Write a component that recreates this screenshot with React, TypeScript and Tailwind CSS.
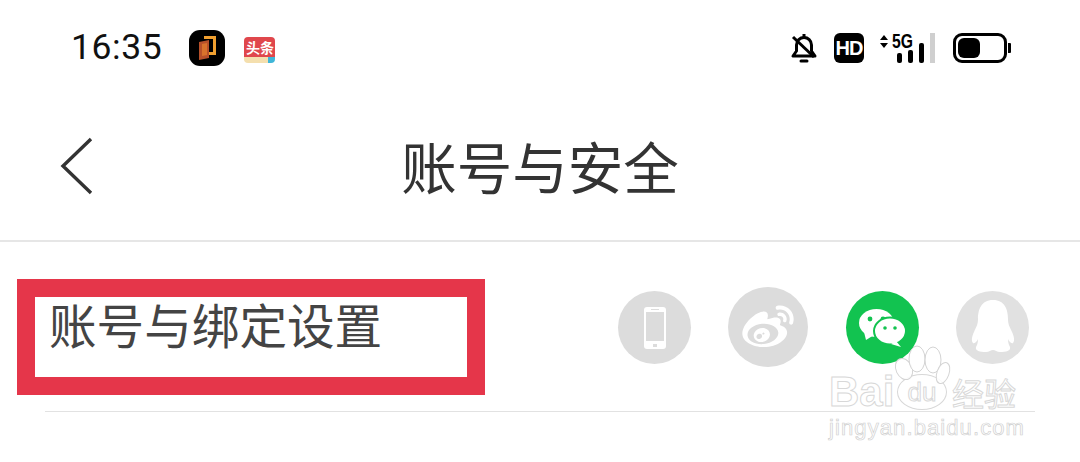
import React from "react";
import { RiWeiboFill } from "react-icons/ri";

const cjk = "font-['Noto_Sans_CJK_SC','Noto_Sans',sans-serif]";

function AppIcon() {
  return (
    <div className="w-9 h-9 rounded-[11px] bg-black flex items-center justify-center">
      <svg width="22" height="26" viewBox="0 0 22 26">
        <path d="M3 7 L13 5 V23 L3 25 Z" fill="#b8502a" />
        <path d="M6 9 L11 8 V20 L6 21 Z" fill="#d9722c" />
        <path d="M8 1 H20 V20 H13 V17 H17 V4 H8 Z" fill="#f0a030" />
      </svg>
    </div>
  );
}

function Toutiao() {
  return (
    <div className="w-[31px] h-[26px] flex flex-col">
      <div className="h-[20px] rounded-t-[4px] bg-[#e0474c] flex items-center justify-center">
        <span className={`text-white text-[14px] leading-[20px] font-bold ${cjk}`}>头条</span>
      </div>
      <div className="flex h-[6px]">
        <div className="flex-1 rounded-bl-[4px] bg-[#f4dfae]" />
        <div className="w-[7px] rounded-br-[4px] bg-[#3fb6d8]" />
      </div>
    </div>
  );
}

function StatusRight() {
  return (
    <div className="flex items-center">
      <svg width="28" height="32" viewBox="0 0 28 32" fill="none" stroke="#000" strokeWidth="3">
        <path d="M3 24 H25 L21.5 19 V13 C21.5 8.5 18 5.5 14 5.5 C10 5.5 6.5 8.5 6.5 13 V19 Z" strokeLinejoin="round" />
        <path d="M14 2 V5" />
        <path d="M3 5 L24 25" />
        <path d="M11 29 H17" strokeLinecap="round" strokeWidth="3" />
      </svg>
      <div className="ml-[16px] w-[30px] h-[30px] rounded-[6px] bg-black text-white flex items-center justify-center text-[20px] font-bold tracking-[-1px] font-['Liberation_Sans',sans-serif]">
        <span>HD</span>
      </div>
      <svg width="56" height="40" viewBox="0 -4 56 40" className="ml-[15px]">
        <path d="M1 8 L5 3 L9 8 Z M1 11 L9 11 L5 16 Z" fill="#000" />
        <rect x="18" y="21" width="5" height="10" rx="2" fill="#000" />
        <rect x="29" y="18" width="5" height="13" rx="2" fill="#000" />
        <rect x="40" y="11" width="5" height="20" rx="2" fill="#000" />
        <rect x="51" y="1" width="5" height="30" fill="#cfcfcf" />
        <text x="13" y="16" fontSize="20" fontWeight="700" fontFamily="Liberation Sans" fill="#000" textLength="21" lengthAdjust="spacingAndGlyphs">5G</text>
      </svg>
      <div className="ml-[18px] w-[54px] h-[30px] rounded-[9px] border-[3px] border-black p-[2px] bg-white">
        <div className="w-[22px] h-full rounded-[6px] bg-black" />
      </div>
      <div className="ml-[1px] w-[3px] h-[10px] bg-black rounded-r-[1px]" />
    </div>
  );
}

function Circle({ children, className }: { children: React.ReactNode; className: string }) {
  return <div className={`rounded-full flex items-center justify-center shrink-0 ${className}`}>{children}</div>;
}

function Watermark() {
  return (
    <div className="absolute left-[829px] top-[372px] w-[200px] h-[70px] pointer-events-none">
      <svg className="absolute left-[64px] top-[-27px]" width="60" height="42" viewBox="0 0 60 42" fill="#fff" fillOpacity="0.85" stroke="#d4d4d4" strokeWidth="1">
        <ellipse cx="11" cy="24" rx="8" ry="11" transform="rotate(-25 11 24)" />
        <ellipse cx="24" cy="14" rx="8" ry="13" />
        <ellipse cx="40" cy="15" rx="8" ry="13" />
        <ellipse cx="50" cy="28" rx="6" ry="11" transform="rotate(20 50 28)" />
      </svg>
      <div className="flex items-center h-[40px] text-transparent [-webkit-text-stroke:1px_#d8d8d8] font-['Liberation_Sans',sans-serif]">
        <span className="text-[42px] leading-[40px] font-bold w-[68px]">Bai</span>
        <div className="w-[50px] h-[36px] rounded-[50%] border border-[#d8d8d8] bg-white flex items-center justify-center">
          <span className="text-[26px] leading-none">du</span>
        </div>
        <span className={`text-[32px] leading-[40px] ml-[5px] ${cjk}`}>经验</span>
      </div>
      <div className="mt-[3px] text-[22px] leading-[26px] tracking-[1.1px] text-transparent [-webkit-text-stroke:0.7px_#d0d0d0] font-['Liberation_Sans',sans-serif]">
        jingyan.baidu.com
      </div>
    </div>
  );
}

export default function App() {
  return (
    <div className="relative w-[1080px] h-[462px] bg-white overflow-hidden">
      {/* status bar */}
      <div className="h-[96px] flex items-center pl-[71px] pr-[69px]">
        <span className="text-[35.5px] leading-[40px] -mt-[2px] tracking-[0.6px] text-[#111] font-['Roboto',sans-serif]">16:35</span>
        <div className="ml-[27px]"><AppIcon /></div>
        <div className="ml-[19px] mt-[3px]"><Toutiao /></div>
        <div className="ml-auto"><StatusRight /></div>
      </div>

      {/* header */}
      <div className="relative h-[146px] flex items-center justify-center border-b-2 border-[#e6e6e6]">
        <svg className="absolute left-[59px] top-[41px]" width="34" height="58" viewBox="0 0 34 58" fill="none" stroke="#333" strokeWidth="3.4">
          <path d="M32 2 L4 29 L32 56" />
        </svg>
        <h1 className={`text-[55.5px] leading-[60px] text-[#333] font-normal -mt-[6px] ${cjk}`}>账号与安全</h1>
      </div>

      {/* row */}
      <div className="relative h-[169px] flex items-start">
        <div className="mt-[37px] ml-[17px] w-[468px] h-[116px] border-[18px] border-[#e5364a] pl-[14px] flex items-start">
          <span className={`text-[47.6px] leading-[54px] text-[#444] ${cjk}`}>账号与绑定设置</span>
        </div>
        <div className="ml-[133px] mt-[46px] flex items-center">
          <Circle className="w-[73px] h-[73px] bg-[#dcdcdc]">
            <div className="w-[22px] h-[42px] rounded-[3px] bg-white flex flex-col items-center justify-between py-[2px]">
              <div className="w-[8px] h-[1px] bg-[#dcdcdc]" />
              <div className="w-[18px] h-[29px] bg-[#dcdcdc]" />
              <div className="w-[4px] h-[3px] bg-[#dcdcdc]" />
            </div>
          </Circle>
          <Circle className="ml-[37px] w-[80px] h-[80px] bg-[#dcdcdc] -mt-[1px]">
            <RiWeiboFill className="text-white text-[56px]" />
          </Circle>
          <Circle className="ml-[38px] w-[73px] h-[73px] bg-[#12c350]">
            <svg width="47" height="38" viewBox="0 0 47 38">
              <ellipse cx="17.5" cy="14" rx="17.5" ry="14" fill="#fff" />
              <path d="M5 23 L7 31 L15 26 Z" fill="#fff" />
              <circle cx="11" cy="10" r="2.4" fill="#12c350" />
              <circle cx="24" cy="10" r="2.4" fill="#12c350" />
              <ellipse cx="31" cy="22" rx="16" ry="13.5" fill="#fff" stroke="#12c350" strokeWidth="2" />
              <path d="M37 32 L42 38 L32 35 Z" fill="#fff" />
              <circle cx="26" cy="19" r="1.8" fill="#12c350" />
              <circle cx="36" cy="19" r="1.8" fill="#12c350" />
            </svg>
          </Circle>
          <Circle className="ml-[37px] w-[73px] h-[73px] bg-[#e1e1e1]">
            <svg width="44" height="58" viewBox="0 0 44 58" fill="#fff">
              <path d="M22 1 C10 1 7 11 7 20 C7 26 5 28 3 33 C1 37 0 42 2 44 C4 45 6 42 7 40 C7 44 6 46 5 48 C4 52 9 53 15 53 C18 53 20 51 22 51 C24 51 26 53 29 53 C35 53 40 52 39 48 C38 46 37 44 37 40 C38 42 40 45 42 44 C44 42 43 37 41 33 C39 28 37 26 37 20 C37 11 34 1 22 1 Z" />
            </svg>
          </Circle>
        </div>
      </div>
      <div className="ml-[45px] mr-[45px] h-px bg-[#e2e2e2]" />

      <Watermark />
    </div>
  );
}
